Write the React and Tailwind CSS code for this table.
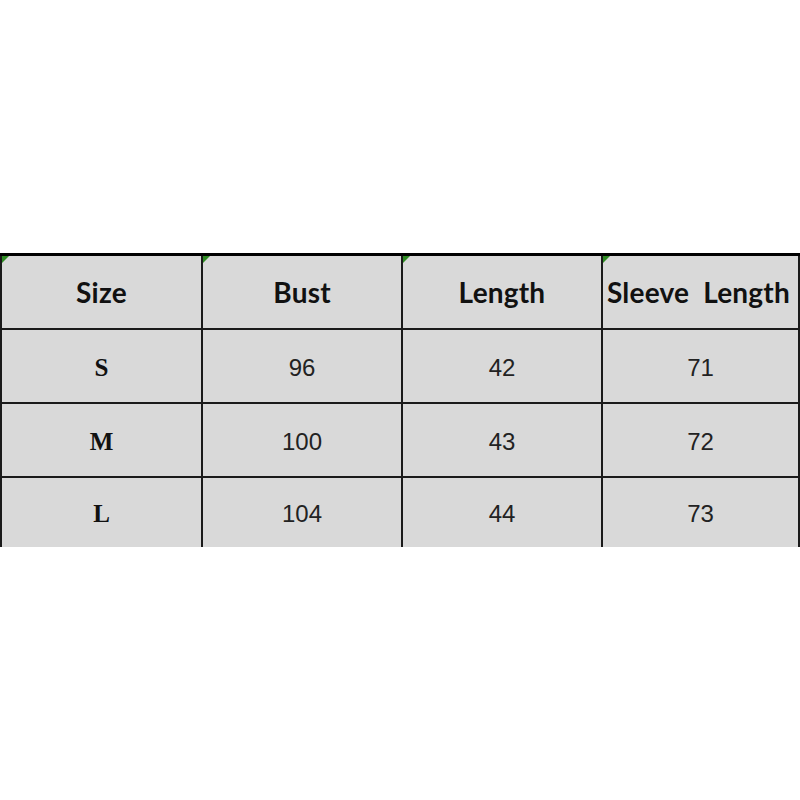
const headers = ["Size", "Bust", "Length", "Sleeve\u00a0\u00a0Length"];
const rows = [
  ["S", "96", "42", "71"],
  ["M", "100", "43", "72"],
  ["L", "104", "44", "73"],
];

function Corner() {
  return (
    <span className="absolute left-0 top-0 h-0 w-0 border-l-[7px] border-b-[7px] border-l-[#2e8b23] border-b-transparent" />
  );
}

export default function App() {
  return (
    <div className="w-[800px] h-[800px] bg-white overflow-hidden">
      <div className="mt-[253px] border-t-[3px] border-black bg-[#d9d9d9]">
        <div className="grid grid-cols-[201px_200px_200px_199px] h-[74px] border-b-2 border-[#1a1a1a]">
          {headers.map((h, i) => (
            <div
              key={h}
              className={`relative flex items-center justify-center border-l-2 border-[#1a1a1a] ${i === 3 ? "border-r-2 justify-start pl-[4px]" : ""}`}
            >
              <Corner />
              <span
                className="text-[28px] font-bold text-[#111] whitespace-nowrap tracking-[0.2px]"
                style={{ fontFamily: "Lato, 'Open Sans', sans-serif" }}
              >
                {h}
              </span>
            </div>
          ))}
        </div>
        {rows.map((r, ri) => (
          <div
            key={r[0]}
            className={`grid grid-cols-[201px_200px_200px_199px] ${ri < 2 ? "h-[74px] border-b-2 border-[#1a1a1a]" : "h-[69px]"}`}
          >
            {r.map((c, ci) => (
              <div
                key={ci}
                className={`flex items-center justify-center pt-[3px] border-l-2 border-[#1a1a1a] ${ci === 3 ? "border-r-2" : ""}`}
              >
                {ci === 0 ? (
                  <span
                    className="text-[25px] font-bold text-[#111]"
                    style={{ fontFamily: "'Liberation Serif', serif" }}
                  >
                    {c}
                  </span>
                ) : (
                  <span
                    className="text-[24px] text-[#222]"
                    style={{ fontFamily: "'Liberation Sans', Arial, sans-serif" }}
                  >
                    {c}
                  </span>
                )}
              </div>
            ))}
          </div>
        ))}
      </div>
    </div>
  );
}
